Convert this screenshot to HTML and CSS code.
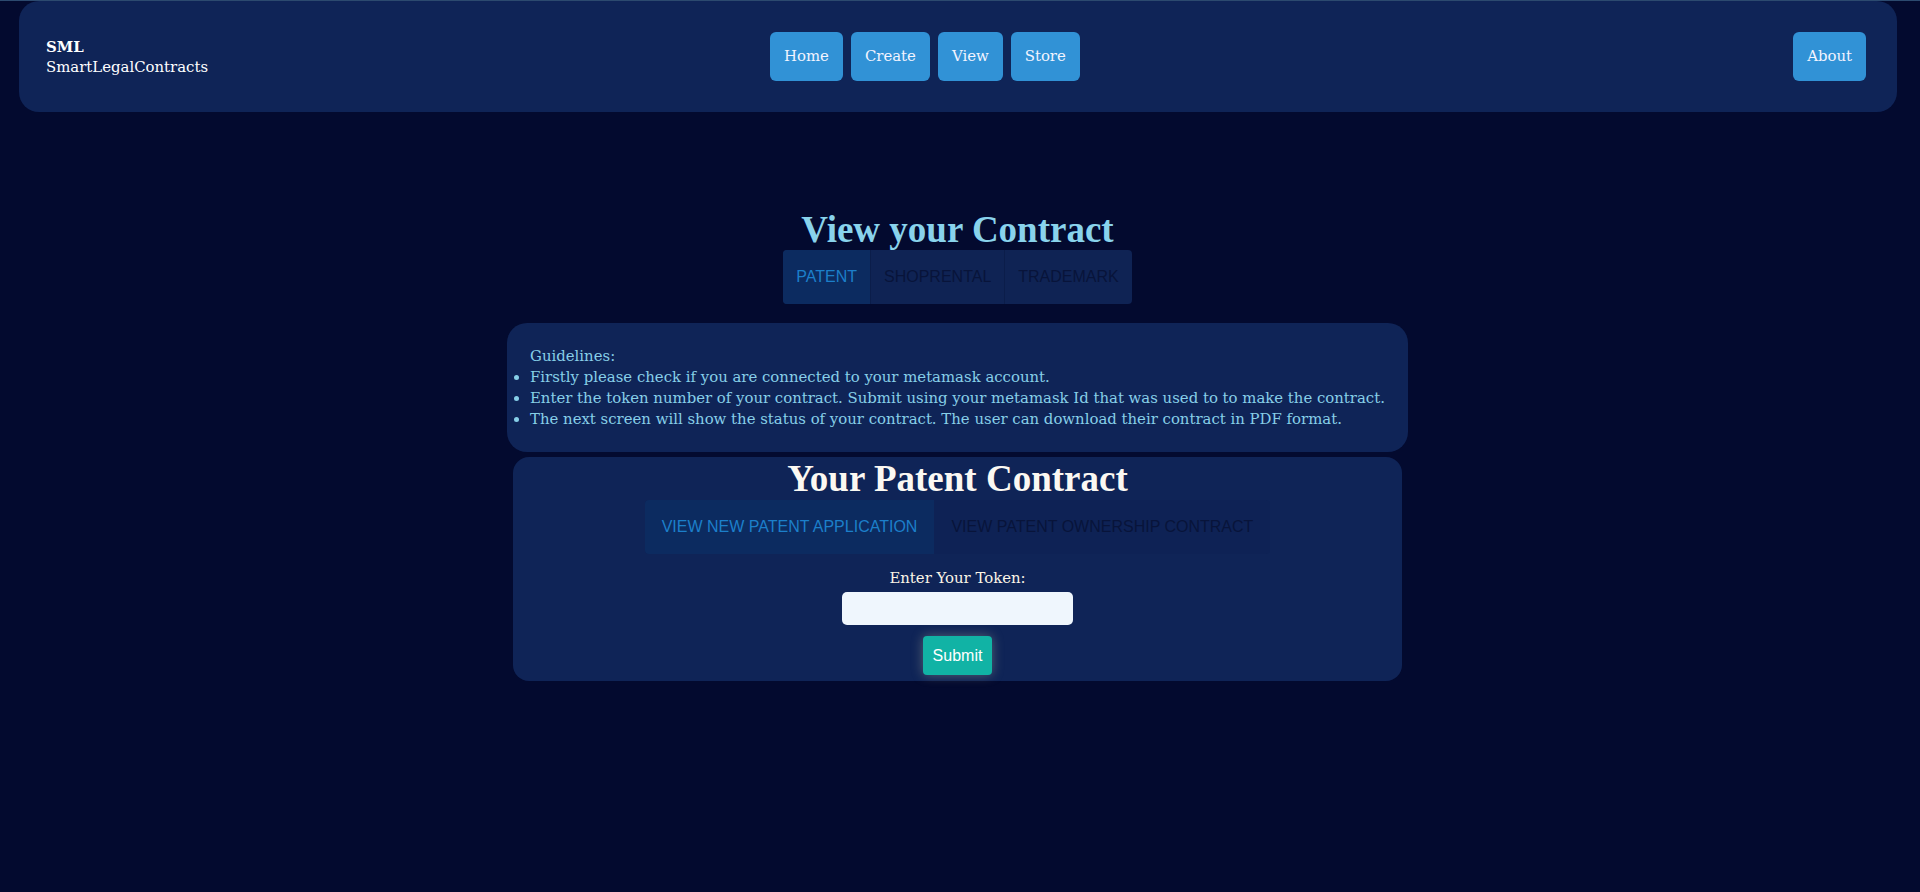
FILE: index.html
```html
<!DOCTYPE html>
<html lang="en">
<head>
<meta charset="utf-8">
<title>SmartLegalContracts - View</title>
<link rel="stylesheet" href="styles.css">
</head>
<body>
<div class="page">
  <header class="navbar">
    <div class="brand">
      <div class="brand-short">SML</div>
      <div class="brand-long">SmartLegalContracts</div>
    </div>
    <nav class="nav-links">
      <a class="nav-btn" href="#">Home</a>
      <a class="nav-btn" href="#">Create</a>
      <a class="nav-btn" href="#">View</a>
      <a class="nav-btn" href="#">Store</a>
    </nav>
    <div class="nav-right">
      <a class="nav-btn" href="#">About</a>
    </div>
  </header>

  <main class="main">
    <h1 class="page-title">View your Contract</h1>
    <div class="tabs">
      <button class="tab tab-active">PATENT</button>
      <button class="tab">SHOPRENTAL</button>
      <button class="tab">TRADEMARK</button>
    </div>

    <section class="guidelines">
      <div class="guidelines-title">Guidelines:</div>
      <ul class="guidelines-list">
        <li>Firstly please check if you are connected to your metamask account.</li>
        <li>Enter the token number of your contract. Submit using your metamask Id that was used to to make the contract.</li>
        <li>The next screen will show the status of your contract. The user can download their contract in PDF format.</li>
      </ul>
    </section>

    <section class="contract-card">
      <h2 class="card-title">Your Patent Contract</h2>
      <div class="tabs tabs-sub">
        <button class="tab tab-active">VIEW NEW PATENT APPLICATION</button>
        <button class="tab">VIEW PATENT OWNERSHIP CONTRACT</button>
      </div>
      <form class="token-form">
        <label class="token-label" for="token">Enter Your Token:</label>
        <input class="token-input" id="token" type="text">
        <button class="submit-btn" type="button">Submit</button>
      </form>
    </section>
  </main>
</div>
</body>
</html>
```

FILE: styles.css
```css
html, body {
  margin: 0;
  padding: 0;
}

body {
  background: #030a2f;
  border-top: 1px solid #2c4a6f;
  font-family: "DejaVu Serif", "Liberation Serif", serif;
  font-size: 14.9px;
  min-height: 891px;
}

.page {
  width: 1915px;
}

.navbar {
  margin: 0 18px 0 19px;
  height: 111px;
  background: #0f2457;
  border-radius: 20px;
  display: grid;
  grid-template-columns: 724px auto 1fr;
  align-items: center;
  padding: 0 31px 0 27px;
  box-sizing: border-box;
}

.brand {
  color: #ffffff;
  line-height: 20px;
}

.brand-short {
  font-weight: bold;
}

.nav-links {
  display: flex;
  gap: 8px;
}

.nav-right {
  display: flex;
  justify-content: flex-end;
}

.nav-btn {
  display: block;
  height: 49px;
  line-height: 49px;
  padding: 0 14px;
  background: #3192d6;
  color: #f3f4ff;
  border-radius: 6px;
  text-decoration: none;
}

.main {
  display: flex;
  flex-direction: column;
  align-items: center;
}

.page-title {
  margin: 98px 0 0;
  font-family: "Liberation Serif", serif;
  font-weight: bold;
  font-size: 37px;
  line-height: 40px;
  color: #89d3ec;
}

.tabs {
  display: flex;
  height: 54px;
  background: #0f2354;
  border-radius: 4px;
  overflow: hidden;
}

.tab {
  font-family: "Liberation Sans", Arial, sans-serif;
  font-size: 16px;
  padding: 0 13px;
  border: 0;
  border-right: 1px solid #0b1d4a;
  background: transparent;
  color: #08143a;
  cursor: pointer;
}

.tab:last-child {
  border-right: 0;
}

.tab-active {
  background: #0c2b60;
  color: #1c7fca;
}

.guidelines {
  margin-top: 19px;
  width: 901px;
  box-sizing: border-box;
  padding: 23px 20px 22px 23px;
  background: #0f2457;
  border-radius: 20px;
  color: #87cfe8;
  line-height: 21px;
}

.guidelines-list {
  margin: 0;
  padding: 0;
}

.contract-card {
  margin-top: 5px;
  width: 889px;
  box-sizing: border-box;
  padding: 0 0 6px;
  background: #0f2457;
  border-radius: 16px;
  display: flex;
  flex-direction: column;
  align-items: center;
}

.card-title {
  margin: 0;
  font-family: "Liberation Serif", serif;
  font-weight: bold;
  font-size: 37px;
  line-height: 43px;
  color: #fbf8f2;
}

.tabs-sub {
  background: #0e2255;
  border-radius: 4px;
}

.tabs-sub .tab {
  border-right: 0;
  padding: 0 17px;
}

.token-form {
  display: flex;
  flex-direction: column;
  align-items: center;
}

.token-label {
  margin-top: 14px;
  line-height: 21px;
  color: #fbf5e6;
}

.token-input {
  margin-top: 3px;
  width: 231px;
  height: 33px;
  box-sizing: border-box;
  border: 0;
  border-radius: 5px;
  background: #eff6fd;
}

.submit-btn {
  margin-top: 11px;
  height: 39px;
  padding: 0 10px;
  border: 0;
  border-radius: 4px;
  background: #11b3a5;
  color: #ffffff;
  font-family: "Liberation Sans", Arial, sans-serif;
  font-size: 16px;
  box-shadow: 0 0 12px rgba(220, 215, 170, 0.35);
  cursor: pointer;
}
```
